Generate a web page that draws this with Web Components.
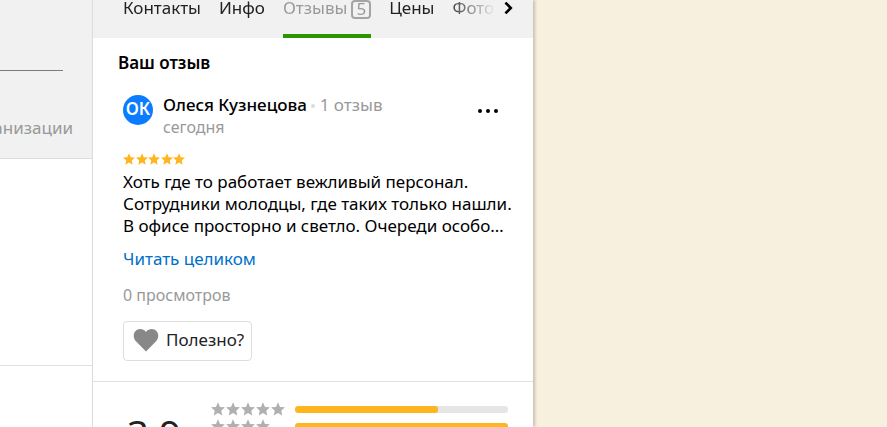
<!DOCTYPE html>
<html lang="ru">
<head>
<meta charset="utf-8">
<title>Отзывы</title>
<style>
  body {
    margin: 0;
    font: 17px/22px "Noto Sans", sans-serif;
    color: #000;
  }
</style>
</head>
<body>
<org-page>
  <side-panel slot="side"></side-panel>
  <org-card slot="card">
    <org-tabs slot="tabs">
      <org-tab>Контакты</org-tab>
      <org-tab>Инфо</org-tab>
      <org-tab active count="5">Отзывы</org-tab>
      <org-tab>Цены</org-tab>
      <org-tab>Фото</org-tab>
    </org-tabs>
    <user-review name="Олеся Кузнецова" initials="ОК" reviews="1 отзыв" date="сегодня" rating="5" views="0 просмотров">
      Хоть где то работает вежливый персонал.<br>
      Сотрудники молодцы, где таких только нашли.<br>
      В офисе просторно и светло. Очереди особо…
    </user-review>
    <rating-summary score="3.9">
      <rating-row stars="5" value="67"></rating-row>
      <rating-row stars="4" value="100"></rating-row>
    </rating-summary>
  </org-card>
</org-page>

<script>
const STAR = 'M8 0.4 L10.3 5.6 L15.9 6.1 L11.7 9.9 L12.9 15.5 L8 12.6 L3.1 15.5 L4.3 9.9 L0.1 6.1 L5.7 5.6 Z';

function render(host, html) {
  const template = document.createElement('template');
  template.innerHTML = html;
  host.attachShadow({ mode: 'open' });
  host.shadowRoot.appendChild(template.content.cloneNode(true));
}

class OrgPage extends HTMLElement {

  constructor() {
    super();
    render(this, `
      <style>
        :host {
          display: grid;
          grid-template-columns: 92px 441px 1fr;
          height: 100vh;
          overflow: hidden;
          background: #f7f0de;
        }
        ::slotted(*) {
          min-width: 0;
          min-height: 0;
        }
      </style>
      <slot name="side"></slot>
      <slot name="card"></slot>
    `);
  }

}

class SidePanel extends HTMLElement {

  constructor() {
    super();
    render(this, `
      <style>
        :host {
          display: flex;
          flex-direction: column;
          overflow: hidden;
          background: #fff;
        }
        .search {
          display: flex;
          flex-direction: column;
          align-items: flex-end;
          padding: 70px 19px 19px 0;
          border-bottom: 1px solid #ddd;
          background: #f1f1f1;
          color: #999;
        }
        .line {
          width: 100%;
          margin: 0 10px 46px 0;
          border-top: 1px solid #7c7c78;
        }
        .block {
          height: 206px;
          border-bottom: 1px solid #e0e0e0;
        }
      </style>
      <div class="search">
        <div class="line"></div>
        <span>анизации</span>
      </div>
      <div class="block"></div>
    `);
  }

}

class OrgCard extends HTMLElement {

  constructor() {
    super();
    render(this, `
      <style>
        :host {
          display: block;
          border-left: 1px solid #ddd;
          background: #fff;
          box-shadow: 2px 0 3px rgba(0, 0, 0, 0.2);
        }
      </style>
      <slot name="tabs"></slot>
      <slot></slot>
    `);
  }

}

class OrgTabs extends HTMLElement {

  constructor() {
    super();
    render(this, `
      <style>
        :host {
          display: flex;
          height: 38px;
          padding: 0 13px 0 30px;
          background: #f1f1f1;
        }
        .list {
          flex: 1;
          display: flex;
          gap: 18px;
          min-width: 0;
          overflow: hidden;
          -webkit-mask-image: linear-gradient(to left, transparent, #000 52px);
          mask-image: linear-gradient(to left, transparent, #000 52px);
        }
        button {
          width: 24px;
          height: 16px;
          padding: 0;
          border: 0;
          background: none;
        }
        svg {
          display: block;
          margin: 0 auto;
        }
      </style>
      <nav class="list"><slot></slot></nav>
      <button aria-label="Дальше">
        <svg width="10" height="16" viewBox="0 0 10 16" fill="none" stroke="#000" stroke-width="2.6">
          <path d="M2.4 2.6 L7.8 8 L2.4 13.4"/>
        </svg>
      </button>
    `);
  }

}

class OrgTab extends HTMLElement {

  constructor() {
    super();
    const count = this.getAttribute('count');
    render(this, `
      <style>
        :host {
          flex: none;
        }
        a {
          display: flex;
          gap: 4px;
          box-sizing: border-box;
          height: 38px;
          border-bottom: 4px solid transparent;
          line-height: 16px;
          color: #222;
          text-decoration: none;
        }
        :host([active]) a {
          border-color: #2a9600;
          color: #999;
        }
        .count {
          box-sizing: border-box;
          height: 19px;
          padding: 0 3px;
          border: 2px solid #a4a4a4;
          border-radius: 4px;
          line-height: 13px;
        }
      </style>
      <a href="#"><slot></slot>${count ? `<span class="count">${count}</span>` : ''}</a>
    `);
  }

}

class StarRow extends HTMLElement {

  constructor() {
    super();
    const count = Number(this.getAttribute('count'));
    const star = `<svg viewBox="0 0 16 16"><path d="${STAR}"/></svg>`;
    render(this, `
      <style>
        :host {
          display: flex;
          gap: 1px;
        }
        svg {
          flex: none;
          width: var(--star-size, 14px);
          height: var(--star-size, 14px);
          fill: currentColor;
        }
      </style>
      ${star.repeat(count)}
    `);
  }

}

class UserReview extends HTMLElement {

  constructor() {
    super();
    render(this, `
      <style>
        :host {
          display: block;
          padding: 14px 30px 20px;
          border-bottom: 1px solid #e0e0e0;
        }
        h2 {
          margin: 0 -5px 20px;
          font-size: 17px;
          font-weight: 600;
        }
        header {
          display: flex;
          gap: 10px;
        }
        .avatar {
          width: 30px;
          height: 30px;
          margin-top: 1px;
          border-radius: 50%;
          background: #0a7cff;
          color: #fff;
          font-weight: 600;
          line-height: 28px;
          text-align: center;
        }
        .who {
          flex: 1;
        }
        .name {
          font-weight: 500;
        }
        .muted {
          color: #999;
        }
        .small {
          font-size: 16px;
        }
        .dot {
          display: inline-block;
          width: 4px;
          height: 4px;
          margin: 0 0 3px;
          border-radius: 50%;
          background: #ddd;
        }
        button {
          font: inherit;
          color: inherit;
          background: none;
        }
        .more {
          display: flex;
          gap: 4px;
          margin: 15px 5px 0 0;
          padding: 0;
          border: 0;
        }
        .more i {
          width: 4px;
          height: 4px;
          border-radius: 50%;
          background: #000;
        }
        star-row {
          justify-content: space-between;
          width: 62px;
          margin: 15px 0 6px;
          color: #ffb61e;
          gap: 0;
          --star-size: 12px;
        }
        p {
          margin: 0 0 11px;
          white-space: nowrap;
        }
        a {
          color: #0070c9;
          text-decoration: none;
        }
        .views {
          margin: 14px 0 15px;
        }
        .useful {
          display: flex;
          align-items: center;
          gap: 7px;
          height: 40px;
          padding: 0 7px 2px 9px;
          border: 1px solid #ddd;
          border-radius: 4px;
          color: #222;
        }
      </style>
      <h2>Ваш отзыв</h2>
      <header>
        <div class="avatar">${this.getAttribute('initials')}</div>
        <div class="who">
          <div><span class="name">${this.getAttribute('name')}</span> <span class="dot"></span> <span class="muted">${this.getAttribute('reviews')}</span></div>
          <div class="muted small">${this.getAttribute('date')}</div>
        </div>
        <button class="more" aria-label="Ещё"><i></i><i></i><i></i></button>
      </header>
      <star-row count="${this.getAttribute('rating')}"></star-row>
      <p><slot></slot></p>
      <a href="#">Читать целиком</a>
      <div class="views muted small">${this.getAttribute('views')}</div>
      <button class="useful">
        <svg width="26" height="24" viewBox="0 0 26 24" fill="#888">
          <path d="M13 23.4 L3.2 13.6 C0.2 10.4 0 5.8 2.4 3.2 C5.2 0.2 10.2 0.4 13 4 C15.8 0.4 20.8 0.2 23.6 3.2 C26 5.8 25.8 10.4 22.8 13.6 Z"/>
        </svg>
        Полезно?
      </button>
    `);
  }

}

class RatingSummary extends HTMLElement {

  constructor() {
    super();
    render(this, `
      <style>
        :host {
          display: flex;
          padding: 20px 25px 20px 34px;
        }
        .score {
          width: 84px;
          margin-top: 7px;
          color: #222;
          font-size: 38px;
          line-height: 48px;
        }
        .rows {
          flex: 1;
          display: grid;
          gap: 3px;
          align-content: start;
        }
      </style>
      <div class="score">${this.getAttribute('score')}</div>
      <div class="rows"><slot></slot></div>
    `);
  }

}

class RatingRow extends HTMLElement {

  constructor() {
    super();
    render(this, `
      <style>
        :host {
          display: grid;
          grid-template-columns: 74px 1fr;
          align-items: center;
          gap: 10px;
          color: #b0b0b0;
        }
        .bar {
          height: 7px;
          border-radius: 3px;
          background: #e5e5e5;
          overflow: hidden;
        }
        .fill {
          width: ${this.getAttribute('value')}%;
          height: 100%;
          border-radius: 3px;
          background: #ffb61e;
        }
      </style>
      <star-row count="${this.getAttribute('stars')}"></star-row>
      <div class="bar"><div class="fill"></div></div>
    `);
  }

}

customElements.define('star-row', StarRow);
customElements.define('side-panel', SidePanel);
customElements.define('org-tab', OrgTab);
customElements.define('org-tabs', OrgTabs);
customElements.define('user-review', UserReview);
customElements.define('rating-row', RatingRow);
customElements.define('rating-summary', RatingSummary);
customElements.define('org-card', OrgCard);
customElements.define('org-page', OrgPage);
</script>
</body>
</html>
